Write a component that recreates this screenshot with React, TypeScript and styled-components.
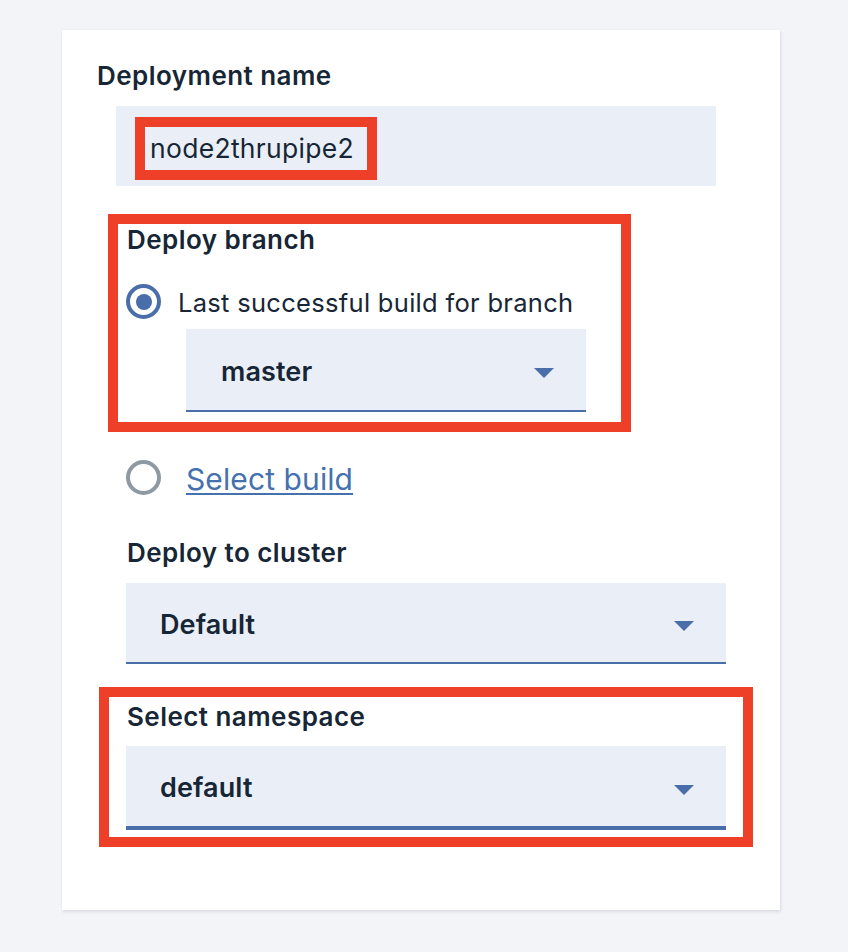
import React from "react";
import styled, { createGlobalStyle } from "styled-components";

const ink = "#172636";
const field = "#eaeff7";
const blue = "#4a6ea9";
const red = "#ee4028";

const GlobalStyle = createGlobalStyle`
  html, body {
    margin: 0;
    padding: 0;
    background: #f3f4f8;
  }
  body {
    font-family: Inter, "Open Sans", "Liberation Sans", sans-serif;
    color: ${ink};
  }
  * { box-sizing: border-box; }
`;

const Page = styled.div`
  padding: 30px 0 42px 62px;
`;

const Card = styled.div`
  width: 718px;
  height: 880px;
  background: #ffffff;
  padding: 30px 0 0 35px;
  box-shadow: 1px 2px 3px rgba(20, 30, 60, 0.1), 0 0 1px rgba(20, 30, 60, 0.08);
  display: flex;
  flex-direction: column;
  align-items: flex-start;
`;

const Label = styled.div<{ $indent?: number; $top?: number }>`
  font-size: 26px;
  line-height: 32px;
  font-weight: 600;
  letter-spacing: 0.45px;
  margin-left: ${(p) => p.$indent ?? 0}px;
  margin-top: ${(p) => p.$top ?? 0}px;
`;

const TextField = styled.div`
  width: 600px;
  height: 80px;
  margin: 14px 0 0 19px;
  padding: 11px 0 0 19px;
  background: ${field};
`;

const Annotation = styled.div<{
  $width?: number;
  $left: number;
  $top: number;
  $pad?: string;
}>`
  border: 10px solid ${red};
  width: ${(p) => (p.$width ? `${p.$width}px` : "fit-content")};
  margin-left: ${(p) => p.$left}px;
  margin-top: ${(p) => p.$top}px;
  padding: ${(p) => p.$pad ?? "0"};
  display: flex;
  flex-direction: column;
  align-items: flex-start;
`;

const InputValue = styled.span`
  font-size: 26.5px;
  line-height: 43px;
  font-weight: 400;
  letter-spacing: 0.3px;
`;

const RadioRow = styled.div<{ $left?: number; $top?: number; $gap: number }>`
  display: flex;
  align-items: center;
  gap: ${(p) => p.$gap}px;
  height: 35px;
  margin-left: ${(p) => p.$left ?? 0}px;
  margin-top: ${(p) => p.$top ?? 0}px;
`;

const RadioCircle = styled.span<{ $checked?: boolean }>`
  width: 35px;
  height: 35px;
  border-radius: 50%;
  border: 4px solid ${(p) => (p.$checked ? blue : "#8e99a4")};
  display: flex;
  align-items: center;
  justify-content: center;
  flex: none;

  &::after {
    content: "";
    display: ${(p) => (p.$checked ? "block" : "none")};
    width: 16px;
    height: 16px;
    border-radius: 50%;
    background: ${blue};
  }
`;

const RadioText = styled.span`
  font-size: 25.5px;
  line-height: 32px;
  font-weight: 400;
  margin-top: 3px;
  letter-spacing: 0.3px;
`;

const LinkText = styled.a`
  font-size: 30px;
  line-height: 34px;
  font-weight: 400;
  color: #4671af;
  text-decoration: underline;
  text-decoration-thickness: 2px;
  text-underline-offset: 3px;
  margin-top: 3px;
  letter-spacing: 0.1px;
  cursor: pointer;
`;

const Select = styled.div<{
  $width: number;
  $height: number;
  $line: number;
  $left?: number;
  $top?: number;
  $padLeft: number;
}>`
  width: ${(p) => p.$width}px;
  height: ${(p) => p.$height}px;
  margin-left: ${(p) => p.$left ?? 0}px;
  margin-top: ${(p) => p.$top ?? 0}px;
  padding: 0 32px 0 ${(p) => p.$padLeft}px;
  background: ${field};
  border-bottom: ${(p) => p.$line}px solid ${blue};
  display: flex;
  align-items: center;
  justify-content: space-between;
`;

const SelectValue = styled.span`
  font-size: 27px;
  line-height: 32px;
  font-weight: 600;
  letter-spacing: 0.1px;
  margin-top: 4px;
`;

const Caret = styled.svg`
  width: 20px;
  height: 10px;
  margin-top: 7px;
  flex: none;
`;

const Arrow = () => (
  <Caret viewBox="0 0 20 10">
    <polygon points="0,0 20,0 10,10" fill={blue} />
  </Caret>
);

export default function App() {
  return (
    <>
      <GlobalStyle />
      <Page>
        <Card>
          <Label>Deployment name</Label>
          <TextField>
            <Annotation $left={0} $top={0} $pad="0 13px 0 5px">
              <InputValue>node2thrupipe2</InputValue>
            </Annotation>
          </TextField>

          <Annotation $width={523} $left={11} $top={28} $pad="0 0 10px 8px">
            <Label $indent={1}>Deploy branch</Label>
            <RadioRow $top={28} $gap={17}>
              <RadioCircle $checked />
              <RadioText>Last successful build for branch</RadioText>
            </RadioRow>
            <Select $width={400} $height={83} $line={2} $left={60} $top={10} $padLeft={35}>
              <SelectValue>master</SelectValue>
              <Arrow />
            </Select>
          </Annotation>

          <RadioRow $left={29} $top={28} $gap={25}>
            <RadioCircle />
            <LinkText>Select build</LinkText>
          </RadioRow>

          <Label $indent={30} $top={42}>Deploy to cluster</Label>
          <Select $width={600} $height={81} $line={2} $left={29} $top={14} $padLeft={34}>
            <SelectValue>Default</SelectValue>
            <Arrow />
          </Select>

          <Annotation $width={654} $left={2} $top={23} $pad="4px 0 7px 17px">
            <Label $indent={1}>Select namespace</Label>
            <Select $width={600} $height={84} $line={4} $top={13} $padLeft={34}>
              <SelectValue>default</SelectValue>
              <Arrow />
            </Select>
          </Annotation>
        </Card>
      </Page>
    </>
  );
}
